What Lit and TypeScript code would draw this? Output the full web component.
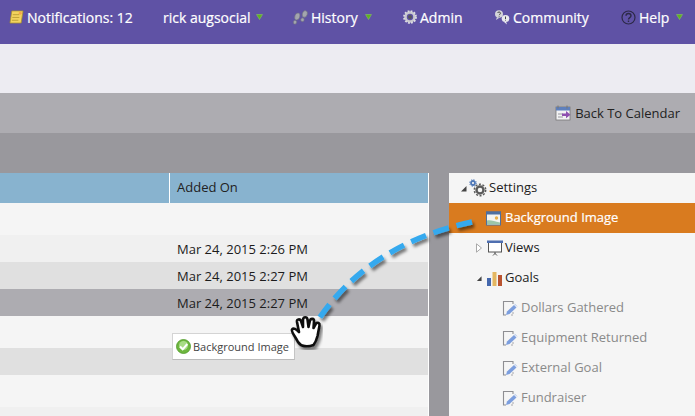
import { LitElement, html, css, svg } from "lit";
import { customElement } from "lit/decorators.js";

const caret = html`<svg class="caret" width="7" height="6" viewBox="0 0 7 6"><path d="M0.500 .5H6.500L3.500 5.500Z" fill="#5fb21f" stroke="#8fca68" stroke-width=".5"/></svg>`;
const pencil = html`<svg class="ico-doc" width="16" height="16" viewBox="0 0 16 16"><path d="M4 15H1.500V1.500H11V4" fill="none" stroke="#8e8e92" stroke-width="1.100"/><path d="M11 15H9M11 12v2" fill="none" stroke="#a8a8ac" stroke-width="1"/><path d="M4 15L5 11.500 12 5l2.500 2.500L7.500 14Z" fill="#7c9ede"/><path d="M12.500 3.800l2.500 2.600" stroke="#b4c6ea" stroke-width="1"/></svg>`;

@customElement("app-root")
export class AppRoot extends LitElement {
  static styles = css`
    :host { display: block; width: 695px; height: 416px; overflow: hidden; position: relative; font-family: "Open Sans", sans-serif; font-size: 13px; color: #222; background: #99989d; }
    .top { height: 44px; background: #5f52a5; display: flex; align-items: center; color: #fff; font-size: 14px; padding-bottom: 10px; padding-left: 9px; white-space: nowrap; box-sizing: border-box; }
    .nav { display: flex; align-items: center; gap: 3px; -webkit-text-stroke: 0.2px #fff; }
    .caret { margin-left: 2px; margin-top: -1px; }
    .wide .caret { margin-left: 4px; }
    .n1 { width: 154px; }
    .n2 { width: 129px; }
    .n3 { width: 111px; }
    .n4 { width: 91px; }
    .n5 { width: 127px; }
    .sub { height: 49px; background: #edecf2; }
    .band { height: 40px; background: #adacb1; display: flex; justify-content: flex-end; align-items: center; padding-right: 15px; gap: 4px; }
    .band2 { height: 40px; }
    .main { display: flex; height: 243px; }
    .table { width: 428px; border-right: 1px solid #fff; box-sizing: content-box; display: flex; flex-direction: column; }
    .hdr { height: 30px; background: #88b3cf; display: flex; flex: none; }
    .hdr .c1 { width: 169px; border-right: 1px solid #fff; }
    .hdr .c2 { flex: 1; line-height: 29px; padding-left: 7px; }
    .row { flex: none; padding-left: 177px; box-sizing: border-box; display: flex; align-items: center; color: #1c1c1c; }
    .a { background: #f5f5f5; }
    .b { background: #f0f0f0; }
    .c { background: #e0e0e0; }
    .d { background: #adacb1; }
    .h32 { height: 32px; }
    .h27 { height: 27px; }
    .h9 { height: 9px; }
    .gap { width: 20px; flex: none; }
    .side { flex: 1; background: #f5f5f5; display: flex; flex-direction: column; }
    .it { height: 30px; flex: none; display: flex; align-items: center; box-sizing: border-box; white-space: nowrap; }
    .it span { margin-bottom: 2px; }
    .sel { background: #d97b1f; color: #fff; -webkit-text-stroke: 0.2px #fff; padding-left: 37px; gap: 4px; }
    .l0 { padding-left: 11px; }
    .l1 { padding-left: 27px; }
    .l2 { padding-left: 53px; gap: 3px; color: #8a8a8a; }
    .tri { margin-right: 2px; flex: none; }
    .tri5 { margin-right: 5px; flex: none; }
    .m2 { margin-left: 2px; }
    .m3 { margin-left: 3px; }
    .tip { position: absolute; left: 172px; top: 333px; width: 123px; height: 27px; background: #fff; border: 1px solid #d4d4d4; border-right-color: #c4c4c4; border-bottom-color: #bbb; box-sizing: border-box; display: flex; align-items: center; padding-left: 3px; gap: 2px; font-size: 11px; color: #444; white-space: nowrap; }
    .overlay { position: absolute; left: 0; top: 0; pointer-events: none; }
  `;

  render() {
    return html`
      <div class="top">
        <div class="nav n1">
          <svg width="15" height="14" viewBox="0 0 16 15"><path d="M3 1H15L13 14H1Z" fill="#f2d35e" stroke="#a88f2e" stroke-width=".8"/><path d="M4 5H11M3.500 8H11M3 11H10" stroke="#b89a30" stroke-width=".9"/><circle cx="12" cy="3.500" r="1.600" fill="#f7a64a"/></svg>
          <span>Notifications: 12</span>
        </div>
        <div class="nav n2"><span>rick augsocial</span>${caret}</div>
        <div class="nav n3 wide">
          <svg width="16" height="15" viewBox="0 0 16 15"><g fill="#a3a5ae" stroke="#6f7180" stroke-width=".6"><ellipse cx="5.300" cy="6.500" rx="2.500" ry="3.600" transform="rotate(18 5.300 6.500)"/><ellipse cx="3" cy="12.300" rx="1.700" ry="1.900" transform="rotate(18 3 12.300)"/><ellipse cx="12.800" cy="4" rx="2.500" ry="3.400" transform="rotate(18 12.800 4)"/><ellipse cx="10.500" cy="9.800" rx="1.700" ry="1.900" transform="rotate(18 10.500 9.800)"/></g></svg>
          <span>History</span>${caret}
        </div>
        <div class="nav n4">
          <svg width="14" height="14" viewBox="0 0 14 14"><circle cx="7" cy="7" r="4.500" fill="none" stroke="#c9c9cf" stroke-width="2.600"/><circle cx="7" cy="7" r="6" fill="none" stroke="#dddde2" stroke-width="1.800" stroke-dasharray="1.800 1.340"/><circle cx="7" cy="7" r="2" fill="#57575c"/></svg>
          <span>Admin</span>
        </div>
        <div class="nav n5">
          <svg width="16" height="16" viewBox="0 0 16 16"><ellipse cx="5" cy="5" rx="4" ry="3.800" fill="#d5d5da"/><path d="M3 8l-1 3 3-2Z" fill="#d5d5da"/><ellipse cx="11.500" cy="9.500" rx="3.800" ry="3.500" fill="#eaeaee"/><path d="M12 12.500l1 3-3-2.500Z" fill="#eaeaee"/><path d="M3.500 4c.5-1.500 3-1.200 3 .2 0 1-1.300 1-1.300 2M5.200 7v.6M11.500 7.500v2.500M11.500 10.800v.7" fill="none" stroke="#444" stroke-width="1"/></svg>
          <span>Community</span>
        </div>
        <div class="nav n6 wide">
          <svg width="15" height="15" viewBox="0 0 15 15"><circle cx="7.500" cy="7.500" r="6.500" fill="none" stroke="#2c2947" stroke-width="1.200"/><path d="M5 5.700c0-3 5-3 5 0 0 2-2.500 1.800-2.500 3.700M7.500 10.600v1.400" fill="none" stroke="#2c2947" stroke-width="1.400"/></svg>
          <span>Help</span>${caret}
        </div>
      </div>
      <div class="sub"></div>
      <div class="band">
        <svg width="16" height="16" viewBox="0 0 16 16"><rect x="1" y="2" width="14" height="13" fill="#f2f2f4" stroke="#777" stroke-width=".8"/><rect x="1" y="2" width="14" height="3.500" fill="#5f80bd"/><path d="M3 .5v3M12 .5v3" stroke="#777"/><path d="M3 8h5v2H3zM3 11h5v2H3z" fill="#c4c4c8"/><path d="M7 8.500H11V6L15.500 9.700 11 13.300V11H7Z" fill="#8e4fb0"/></svg>
        <span>Back To Calendar</span>
      </div>
      <div class="band2"></div>
      <div class="main">
        <div class="table">
          <div class="hdr"><div class="c1"></div><div class="c2">Added On</div></div>
          <div class="row a h32"></div>
          <div class="row b h27">Mar 24, 2015 2:26 PM</div>
          <div class="row c h27">Mar 24, 2015 2:27 PM</div>
          <div class="row d h27">Mar 24, 2015 2:27 PM</div>
          <div class="row a h32"></div>
          <div class="row c h27"></div>
          <div class="row a h32"></div>
          <div class="row b h9"></div>
        </div>
        <div class="gap"></div>
        <div class="side">
          <div class="it l0">
            <svg class="tri" width="7" height="7" viewBox="0 0 7 7"><path d="M6.500 1V6.500H1Z" fill="#444"/></svg>
            <svg width="18" height="18" viewBox="0 0 18 18"><circle cx="4" cy="4" r="2" fill="none" stroke="#4f78b8" stroke-width="1.800"/><circle cx="4" cy="4" r="3.300" fill="none" stroke="#4f78b8" stroke-width="1" stroke-dasharray="1.300 1.300"/><circle cx="11" cy="11" r="3.500" fill="none" stroke="#5a5a5a" stroke-width="2.400"/><circle cx="11" cy="11" r="5.700" fill="none" stroke="#5a5a5a" stroke-width="1.500" stroke-dasharray="2 1.580"/></svg>
            <span class="m2">Settings</span>
          </div>
          <div class="it sel">
            <svg width="15" height="15" viewBox="0 0 15 15"><rect x=".5" y="1" width="14" height="13" fill="#f4f4f0" stroke="#4f6f9f"/><rect x="0" y="0.500" width="15" height="3" fill="#4f6f9f"/><circle cx="10.500" cy="7" r="1.700" fill="#eab04a"/><path d="M1 13V9.500C4 8.500 8 10 14 11.500V13.500H1Z" fill="#9cc5a8"/></svg>
            <span>Background Image</span>
          </div>
          <div class="it l1">
            <svg class="tri5" width="6" height="10" viewBox="0 0 6 10"><path d="M.5 .8L5.500 5 .5 9.200Z" fill="#fff" stroke="#a8a8a8"/></svg>
            <svg width="16" height="16" viewBox="0 0 16 16"><rect x="1.500" y="2" width="13" height="10" fill="#fff" stroke="#555"/><rect x="0" y="0.500" width="16" height="2.500" fill="#4f6fb0"/><path d="M8 12v2M6 15.500l2-2 2 2" fill="none" stroke="#555"/></svg>
            <span class="m2">Views</span>
          </div>
          <div class="it l1">
            <svg class="tri5" width="6" height="7" viewBox="0 0 7 7"><path d="M6.500 1V6.500H1Z" fill="#444"/></svg>
            <svg width="15" height="15" viewBox="0 0 15 15"><rect x="0" y="7" width="4" height="8" fill="#4467ad"/><rect x="5.500" y="1" width="4" height="14" fill="#e4b762"/><rect x="11" y="4" width="4" height="11" fill="#b9532f"/></svg>
            <span class="m3">Goals</span>
          </div>
          <div class="it l2">${pencil}<span>Dollars Gathered</span></div>
          <div class="it l2">${pencil}<span>Equipment Returned</span></div>
          <div class="it l2">${pencil}<span>External Goal</span></div>
          <div class="it l2">${pencil}<span>Fundraiser</span></div>
        </div>
      </div>
      <div class="tip">
        <svg width="15" height="15" viewBox="0 0 15 15"><circle cx="7.500" cy="7.500" r="7" fill="#6eb63f" stroke="#4f9a2a" stroke-width=".8"/><circle cx="7.500" cy="6.500" r="4.500" fill="#a8dc86"/><path d="M4 7.500L6.700 10.300 11.300 5" fill="none" stroke="#fff" stroke-width="2"/></svg>
        <span>Background Image</span>
      </div>
      <svg class="overlay" width="695" height="416" viewBox="0 0 695 416">
        <defs><filter id="sh" x="-10%" y="-10%" width="120%" height="120%"><feDropShadow dx="2" dy="3" stdDeviation="1.500" flood-color="#000" flood-opacity=".5"/></filter></defs>
        <path d="M472 222C415 234 357 262 318 320" fill="none" stroke="#35a9ee" stroke-width="5.500" stroke-dasharray="16 8" filter="url(#sh)"/>
        ${svg`<g filter="url(#sh)"><path d="M298 342C295 336 291 332 292 329.500 293.500 327.500 296 329 299 332L297 322C296.500 319 300 318.500 301 321L303 327 303 319.500C303.500 316.500 307 316.500 307.500 319.500L308.500 327 310 320.500C311 318 314 318.500 314 321L313.500 328 316 323.500C317.500 322 320 323 319.500 325.500L317.500 336C316.500 340 315 343 313.500 345 308 347 301 347 298 342Z" fill="#fff" stroke="#111" stroke-width="2.600" stroke-linejoin="round"/></g>`}
      </svg>
    `;
  }
}
